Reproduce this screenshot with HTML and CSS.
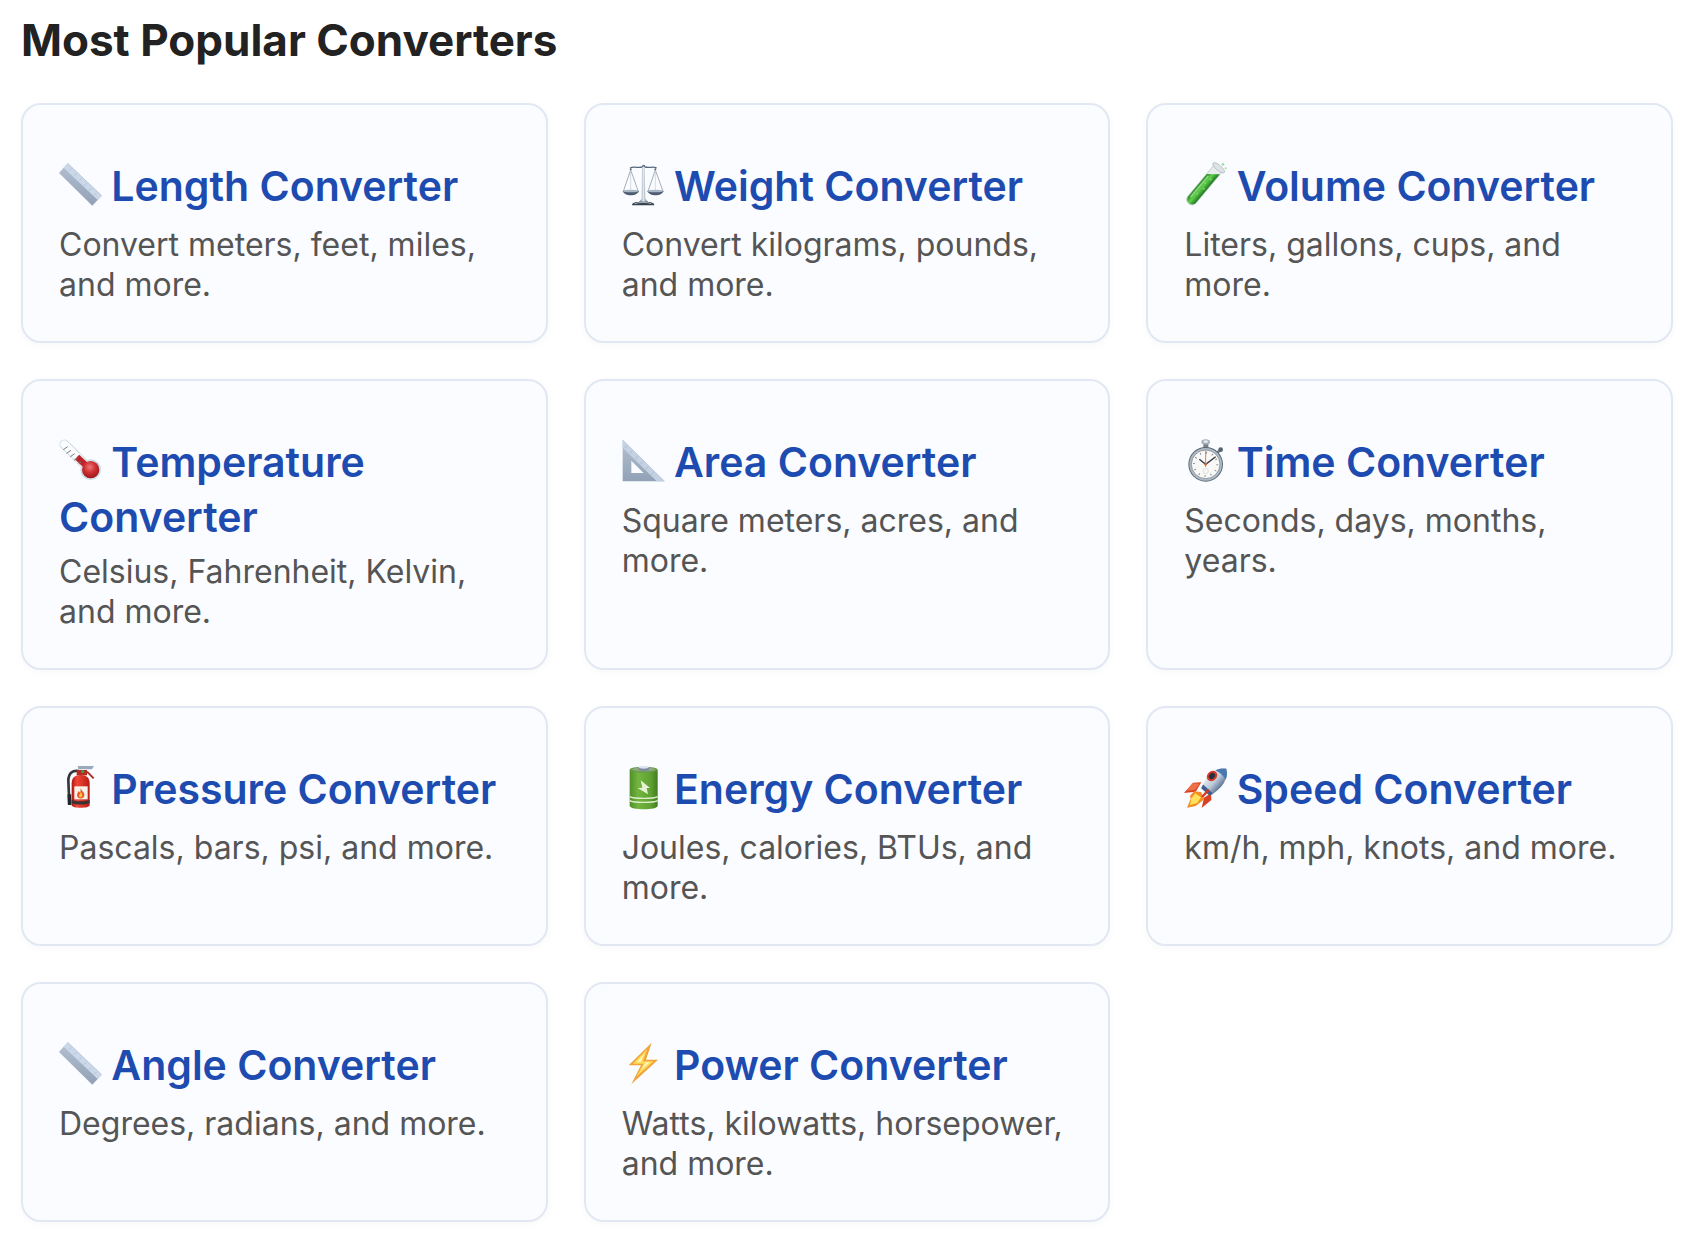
FILE: index.html
```html
<!DOCTYPE html>
<html lang="en">
<head>
<meta charset="utf-8">
<meta name="viewport" content="width=device-width, initial-scale=1">
<title>Most Popular Converters</title>
<link rel="stylesheet" href="styles.css">
</head>
<body>
<svg class="defs" aria-hidden="true">
  <defs>
    <linearGradient id="steel" x1="0" y1="0" x2="0" y2="1"><stop offset="0" stop-color="#b4c0d2"/><stop offset="1" stop-color="#92a1b6"/></linearGradient>
    <linearGradient id="green" x1="0" y1="0" x2="1" y2="0"><stop offset="0" stop-color="#4f8f28"/><stop offset=".3" stop-color="#72b53f"/><stop offset=".75" stop-color="#5fa132"/><stop offset="1" stop-color="#3f7d20"/></linearGradient>
    <linearGradient id="red" x1="0" y1="0" x2="1" y2="0"><stop offset="0" stop-color="#b01712"/><stop offset=".3" stop-color="#f0473a"/><stop offset="1" stop-color="#b91a14"/></linearGradient>
    <linearGradient id="metal" x1="0" y1="0" x2="1" y2="0"><stop offset="0" stop-color="#6c7685"/><stop offset=".5" stop-color="#dde5ee"/><stop offset="1" stop-color="#56606e"/></linearGradient>
    <linearGradient id="liquid" x1="0" y1="0" x2="1" y2="0"><stop offset="0" stop-color="#278a25"/><stop offset=".45" stop-color="#62cf4c"/><stop offset="1" stop-color="#1e7a20"/></linearGradient>
    <linearGradient id="hull" x1="0" y1="0" x2="1" y2="0"><stop offset="0" stop-color="#e3e8ee"/><stop offset=".5" stop-color="#bccadb"/><stop offset="1" stop-color="#5d7593"/></linearGradient>
    <radialGradient id="bulb" cx=".45" cy=".35" r=".65"><stop offset="0" stop-color="#ee7777"/><stop offset=".5" stop-color="#cf3033"/><stop offset="1" stop-color="#9d161c"/></radialGradient>
    <symbol id="ruler" viewBox="27 30 126 126" overflow="visible">
      <path d="M53 28 155 125 127 155 27 57Z" fill="url(#steel)"/>
      <path d="M53 28 155 125 143 138 41 41Z" fill="#cbd8ea"/>
      <path d="m64 43-7 7m22 8-7 7m22 8-7 7m22 8-7 7m22 8-7 7m22 7-7 7" stroke="#a3b3c9" stroke-width="2"/>
      <path d="m53 28 102 97" stroke="#b5c4d8" stroke-width="2"/>
    </symbol>
  </defs>
</svg>
<main class="page">
  <h1 class="page-title">Most Popular Converters</h1>
  <div class="grid">
    <section class="card">
      <h2 class="card-title"><a href="#length"><span class="icon"><svg aria-hidden="true"><use href="#ruler"/></svg></span> Length Converter</a></h2>
      <p class="card-text">Convert meters, feet, miles, and more.</p>
    </section>
    <section class="card">
      <h2 class="card-title"><a href="#weight"><span class="icon"><svg viewBox="24 30 126 126" aria-hidden="true">
        <g fill="none" stroke="#788596" stroke-width="2"><path d="M50 48 28 112m22-64 23 64M124 48l-22 64m22-64 23 64"/><path d="M50 48v62m74-62v62" stroke="#c3ccd6"/></g>
        <path d="M48 42c12-6 25 1 37-3 2-6 6-6 8 0 12 4 24-3 35 3" fill="none" stroke="#56677c" stroke-width="4"/>
        <circle cx="50" cy="46" r="3" fill="#56677c"/><circle cx="124" cy="46" r="3" fill="#56677c"/>
        <path d="M84 40h8l2 94 10 12H73l10-12Z" fill="url(#metal)"/>
        <path d="M26 111h49c-5 17-44 17-49 0ZM100 111h49c-5 17-44 17-49 0Z" fill="#4d5d71"/>
        <ellipse cx="50" cy="111" rx="24" ry="4" fill="#a9b6c5"/><ellipse cx="124" cy="111" rx="24" ry="4" fill="#a9b6c5"/>
        <path d="M54 154c0-9 10-11 33-11s34 2 34 11Z" fill="#38414d"/><path d="M62 149c12-5 39-5 50 0" stroke="#abb7c4" stroke-width="3" fill="none"/>
      </svg></span> Weight Converter</a></h2>
      <p class="card-text">Convert kilograms, pounds, and more.</p>
    </section>
    <section class="card">
      <h2 class="card-title"><a href="#volume"><span class="icon"><svg viewBox="24 30 126 126" aria-hidden="true">
        <g transform="translate(130 39) rotate(40)">
          <path d="M-16 2h32v124c0 23-32 23-32 0Z" fill="#e7edee" stroke="#b5c0c2" stroke-width="2"/>
          <path d="M-15 40 15 16v110c0 21-30 21-30 0Z" fill="url(#liquid)"/>
          <path d="M-8 42v82" stroke="#a8e59b" stroke-width="4" opacity=".8"/>
          <ellipse cx="0" cy="3" rx="22" ry="8" fill="#dde3e5" stroke="#a9b3b6" stroke-width="2"/>
          <g fill="#7ddc67"><circle cx="4" cy="45" r="3"/><circle cx="-2" cy="64" r="3"/><circle cx="6" cy="80" r="3"/><circle cx="0" cy="104" r="3"/></g>
        </g>
        <circle cx="141" cy="31" r="4" fill="#9be0a0"/><circle cx="149" cy="43" r="3" fill="#9be0a0"/>
      </svg></span> Volume Converter</a></h2>
      <p class="card-text">Liters, gallons, cups, and more.</p>
    </section>
    <section class="card">
      <h2 class="card-title"><a href="#temperature"><span class="icon"><svg viewBox="27 33 126 126" aria-hidden="true">
        <path d="M43 46 112 113" stroke="#cfdde5" stroke-width="29" stroke-linecap="round"/>
        <circle cx="122" cy="122" r="31" fill="#cbdce5"/>
        <path d="M43 46 112 113" stroke="#fcfdfe" stroke-width="23" stroke-linecap="round"/>
        <path d="m81 84 30 28" stroke="#be252b" stroke-width="19"/>
        <circle cx="122" cy="122" r="26" fill="url(#bulb)"/>
        <path d="m40 62 13-9m-3 20 13-9m-2 19 13-9m-2 20 10-7m4 17 7-5" stroke="#77797d" stroke-width="3"/>
      </svg></span> Temperature Converter</a></h2>
      <p class="card-text">Celsius, Fahrenheit, Kelvin, and more.</p>
    </section>
    <section class="card">
      <h2 class="card-title"><a href="#area"><span class="icon"><svg viewBox="24 33 126 126" aria-hidden="true">
        <path d="M26 32 152 157H26ZM52 95v37h37Z" fill="url(#steel)" fill-rule="evenodd"/>
        <path d="M26 32 152 157h-24L26 56Z" fill="#c3d1e3"/>
        <path d="m39 50-6 7m22 9-7 7m23 9-7 7m23 9-7 7m23 9-7 7m23 9-7 7" stroke="#9fb0c6" stroke-width="2"/>
      </svg></span> Area Converter</a></h2>
      <p class="card-text">Square meters, acres, and more.</p>
    </section>
    <section class="card">
      <h2 class="card-title"><a href="#time"><span class="icon"><svg viewBox="24 33 126 126" aria-hidden="true">
        <rect x="82" y="44" width="15" height="14" fill="#777f88"/><ellipse cx="89" cy="39" rx="13" ry="8" fill="#a7adb4"/><ellipse cx="89" cy="38" rx="7" ry="4" fill="#e3e7eb"/>
        <path d="m122 73 10-9" stroke="#777f88" stroke-width="8"/><circle cx="134" cy="62" r="7" fill="#59636e"/>
        <circle cx="89" cy="106" r="52" fill="#5d6975"/><circle cx="89" cy="106" r="49" fill="#aebac6"/><circle cx="89" cy="106" r="43" fill="#f8f8f6" stroke="#68747f" stroke-width="2"/>
        <circle cx="89" cy="106" r="35" fill="none" stroke="#8b8f93" stroke-width="6" stroke-dasharray="3 15.33"/>
        <path d="m70 91 19 15 30-23" stroke="#343a42" stroke-width="4" fill="none"/>
        <path d="M89 65v49" stroke="#ed7650" stroke-width="3"/><circle cx="89" cy="106" r="4" fill="#db653b"/><circle cx="89" cy="126" r="8" fill="none" stroke="#d0d2d2" stroke-width="2"/>
      </svg></span> Time Converter</a></h2>
      <p class="card-text">Seconds, days, months, years.</p>
    </section>
    <section class="card">
      <h2 class="card-title"><a href="#pressure"><span class="icon"><svg viewBox="27 30 126 126" aria-hidden="true">
        <path d="M86 42C68 39 56 47 55 70l3 70" fill="none" stroke="#34383e" stroke-width="8"/><path d="m58 112 1 32" stroke="#222629" stroke-width="11"/>
        <path d="M65 80c0-18 10-26 27-26s27 8 27 26v65c0 10-54 10-54 0Z" fill="url(#red)"/>
        <path d="M65 129c12 5 42 5 54 0v10c-12 5-42 5-54 0Z" fill="#3a3234"/>
        <path d="M80 39h31v16H80Z" fill="#b72821"/><circle cx="98" cy="44" r="5" fill="#38a044"/>
        <path d="M83 27h49l-6 10H85Z" fill="#9aaabd"/><path d="m111 44 20 20" stroke="#a5312c" stroke-width="6"/>
        <path d="M73 88h40v39H73Z" fill="#f6f2ec"/>
        <path d="M92 93c3 11 12 11 11 22-1 13-21 13-22 0 0-6 4-8 4-13l6 5Z" fill="#eb5b27"/><path d="M93 106c5 5 5 14 0 15-7 0-7-7-3-10Z" fill="#ffc642"/>
      </svg></span> Pressure Converter</a></h2>
      <p class="card-text">Pascals, bars, psi, and more.</p>
    </section>
    <section class="card">
      <h2 class="card-title"><a href="#energy"><span class="icon"><svg viewBox="24 30 126 126" aria-hidden="true">
        <path d="M47 39v107c0 14 84 14 84 0V39Z" fill="url(#green)"/>
        <ellipse cx="89" cy="38" rx="42" ry="9" fill="#69994e"/><ellipse cx="89" cy="37" rx="35" ry="6" fill="#8cab78"/>
        <path d="M74 31h31v7c-4 4-27 4-31 0Z" fill="#7886a0"/><ellipse cx="89" cy="31" rx="15" ry="4" fill="#dce3ef"/>
        <path d="M47 119c12 7 72 7 84 0m-84 12c12 7 72 7 84 0" fill="none" stroke="#dfedce" stroke-width="4"/>
        <path d="m80 70 5 22-14 1 31 19-4-19h10Z" fill="#e7f1d8"/>
      </svg></span> Energy Converter</a></h2>
      <p class="card-text">Joules, calories, BTUs, and more.</p>
    </section>
    <section class="card">
      <h2 class="card-title"><a href="#speed"><span class="icon"><svg viewBox="24 30 126 126" aria-hidden="true">
        <path d="m76 76-25 1-27 31 35-4ZM105 108l1 21-29 24 7-31Z" fill="#d94124"/>
        <path d="m32 101 19-22 20 1-15 19Z" fill="#ee7245"/>
        <path d="m55 103-13 13 2 10-11 26 26-5 26-20-10-22Z" fill="#f58d22"/><path d="m58 109-12 15-4 20 22-6 11-17Z" fill="#ffe15c"/>
        <g transform="translate(151 35) rotate(42)">
          <path d="M0 0c26 20 30 52 18 92h-36C-30 52-26 20 0 0Z" fill="url(#hull)"/>
          <path d="M0 0c10 7 17 14 21 26-13-5-29-5-42 0C-17 14-10 7 0 0Z" fill="#4c78ae"/>
          <path d="M-20 82h40l-3 12h-34Z" fill="#3e608d"/>
          <path d="M3 82v30" stroke="#d53a25" stroke-width="7"/>
        </g>
        <ellipse cx="108" cy="57" rx="17" ry="14" transform="rotate(-42 108 57)" fill="#d23a2c"/><ellipse cx="108" cy="57" rx="10" ry="8" transform="rotate(-42 108 57)" fill="#26313d"/>
      </svg></span> Speed Converter</a></h2>
      <p class="card-text">km/h, mph, knots, and more.</p>
    </section>
    <section class="card">
      <h2 class="card-title"><a href="#angle"><span class="icon"><svg aria-hidden="true"><use href="#ruler"/></svg></span> Angle Converter</a></h2>
      <p class="card-text">Degrees, radians, and more.</p>
    </section>
    <section class="card">
      <h2 class="card-title"><a href="#power"><span class="icon"><svg viewBox="24 30 126 126" aria-hidden="true">
        <path d="m113 29-69 68h37l-29 57 80-74H96Z" fill="#f1a23a"/><path d="M100 47 56 92h33l-22 39 52-46H87Z" fill="#ffda58"/><path d="M91 62 68 88h27l-14 22 27-22H80Z" fill="#fff6b5"/>
      </svg></span> Power Converter</a></h2>
      <p class="card-text">Watts, kilowatts, horsepower, and more.</p>
    </section>
  </div>
</main>
</body>
</html>
```
FILE: styles.css
```css
* {
  box-sizing: border-box;
}

body {
  margin: 0;
  background: #fff;
  color: #222;
  font-family: Inter, "Liberation Sans", sans-serif;
}

.defs {
  position: absolute;
  width: 0;
  height: 0;
}

.page {
  padding: 12px 19px 24px 21px;
}

.page-title {
  margin: 0 0 35px;
  font-size: 44px;
  font-weight: 700;
  line-height: 56px;
}

.grid {
  display: grid;
  grid-template-columns: repeat(3, minmax(0, 1fr));
  gap: 36px;
}

.card {
  padding: 36px;
  border: 2px solid #e2e8f3;
  border-radius: 20px;
  background: #fafcff;
  box-shadow: 0 2px 8px rgba(0, 0, 0, 0.03);
}

.card-title {
  margin: 14px 0 9px;
  font-size: 41px;
  font-weight: 600;
  line-height: 51px;
}

.card-title a {
  color: #1d4bb0;
  text-decoration: none;
}

.icon {
  display: inline-block;
  width: 42px;
  height: 61px;
  padding: 9px 0 10px;
  vertical-align: -15px;
}

.icon svg {
  display: block;
  width: 42px;
  height: 42px;
  overflow: visible;
}

.card-text {
  margin: 0;
  color: #555;
  font-size: 32px;
  line-height: 40px;
}
```
